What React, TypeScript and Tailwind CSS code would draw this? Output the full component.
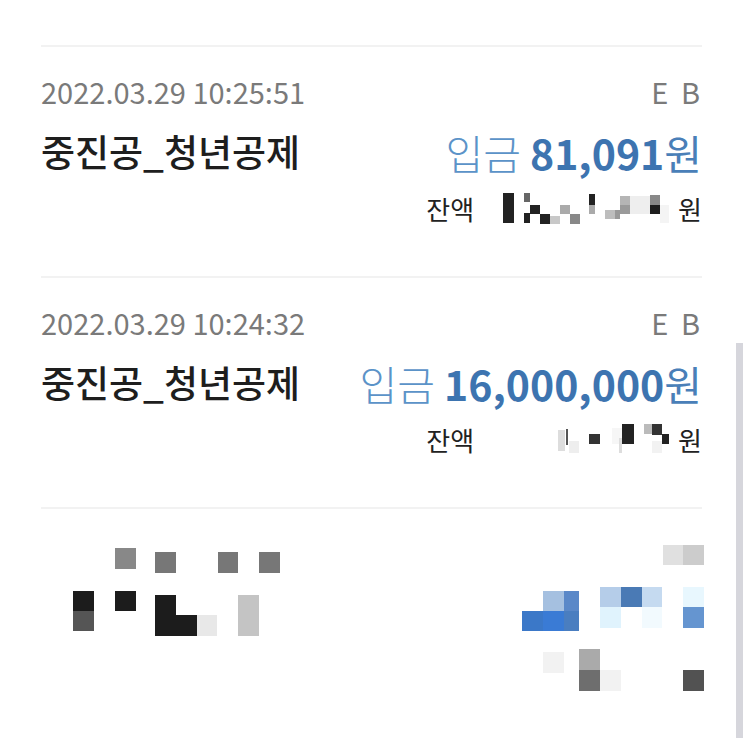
import React from "react";

type Cell = [number, number, number, number, string];

function Mosaic({ x, y, w, h, cells }: { x: number; y: number; w: number; h: number; cells: Cell[] }) {
  return (
    <svg width={w} height={h} viewBox={`${x} ${y} ${w} ${h}`} className="block">
      {cells.map((c, i) => (
        <rect key={i} x={c[0]} y={c[1]} width={c[2] - c[0]} height={c[3] - c[1]} fill={c[4]} />
      ))}
    </svg>
  );
}

const bal1: Cell[] = [
  [501, 192, 512, 222, "#222222"],
  [522, 192, 528, 201, "#666666"],
  [522, 212, 528, 222, "#222222"],
  [528, 204, 538, 213, "#222222"],
  [538, 213, 548, 223, "#222222"],
  [548, 215, 558, 223, "#c8c8c8"],
  [558, 204, 568, 213, "#aaaaaa"],
  [568, 213, 578, 223, "#888888"],
  [587, 193, 593, 204, "#222222"],
  [587, 204, 593, 213, "#aaaaaa"],
  [603, 209, 613, 218, "#bdbdbd"],
  [613, 209, 618, 218, "#999999"],
  [618, 195, 628, 204, "#b5b5b5"],
  [618, 204, 628, 213, "#9a9a9a"],
  [628, 195, 648, 213, "#eeeeee"],
  [648, 194, 658, 204, "#888888"],
  [648, 204, 658, 213, "#1e1e1e"],
  [658, 204, 667, 222, "#f4f4f4"],
];

const bal2: Cell[] = [
  [556, 432, 563, 453, "#dddddd"],
  [567, 443, 577, 455, "#eeeeee"],
  [564, 431, 566, 447, "#555555"],
  [587, 436, 598, 446, "#333333"],
  [610, 430, 620, 446, "#f6f6f6"],
  [617, 440, 620, 455, "#dddddd"],
  [620, 426, 632, 446, "#222222"],
  [642, 426, 650, 436, "#bbbbbb"],
  [650, 426, 660, 437, "#333333"],
  [660, 436, 667, 446, "#222222"],
  [650, 443, 660, 455, "#f2f2f2"],
];

const leftCells: Cell[] = [
  [115, 549, 136, 570, "#888888"],
  [155, 553, 176, 574, "#777777"],
  [218, 553, 238, 574, "#777777"],
  [259, 553, 280, 574, "#777777"],
  [73, 592, 94, 612, "#1c1c1c"],
  [73, 612, 94, 632, "#555555"],
  [115, 592, 136, 612, "#1c1c1c"],
  [155, 596, 176, 637, "#1c1c1c"],
  [176, 616, 197, 637, "#1c1c1c"],
  [197, 616, 217, 637, "#e8e8e8"],
  [238, 596, 259, 637, "#c4c4c4"],
];

const rightCells: Cell[] = [
  [663, 546, 683, 566, "#e0e0e0"],
  [683, 546, 704, 566, "#cccccc"],
  [543, 592, 564, 612, "#a5c0e0"],
  [564, 592, 579, 612, "#5a88c8"],
  [522, 612, 543, 632, "#3b78c8"],
  [543, 612, 564, 632, "#3a7bd5"],
  [564, 612, 579, 632, "#4a7ec0"],
  [600, 588, 621, 608, "#b5cde9"],
  [621, 588, 642, 608, "#4a7ab5"],
  [642, 588, 662, 608, "#c5daf0"],
  [600, 608, 621, 629, "#e0f3fd"],
  [642, 608, 662, 629, "#f2fafe"],
  [683, 588, 704, 608, "#e8f7fe"],
  [683, 608, 704, 629, "#6595d0"],
  [543, 653, 564, 674, "#f2f2f2"],
  [579, 650, 600, 671, "#aaaaaa"],
  [579, 671, 600, 692, "#6e6e6e"],
  [600, 671, 621, 692, "#f2f2f2"],
  [683, 671, 704, 692, "#525252"],
];

const font = { fontFamily: '"Noto Sans CJK KR", "Noto Sans", sans-serif' };

function Item({ date, amount, bal, by }: { date: string; amount: string; bal: Cell[]; by: number }) {
  return (
    <div className="border-t-2 border-[#f2f2f2] pt-[27px] pb-[50px]">
      <div className="flex h-[36px] items-center justify-between text-[29px] text-[#7a7a7a]">
        <span>{date}</span>
        <span className="tracking-[3px] mr-[-1px]">E B</span>
      </div>
      <div className="mt-[20px] flex h-[44px] items-center justify-between">
        <span className="text-[37px] font-medium text-[#1e1e1e]">중진공_청년공제</span>
        <span className="text-[41px] leading-[44px] text-[#3d74b0]">
          <span className="font-light text-[#5b93c8]">입금 </span>
          <span className="font-bold">{amount}</span>
          <span className="text-[#4a7fb8]">원</span>
        </span>
      </div>
      <div className="mt-[16px] flex h-[36px] items-center justify-end text-[26px] text-[#222222]">
        <span>잔액</span>
        <div className="ml-[29px] mr-[9px]">
          <Mosaic x={501} y={by} w={166} h={34} cells={bal} />
        </div>
        <span>원</span>
      </div>
    </div>
  );
}

export default function App() {
  return (
    <div className="relative h-[738px] w-[743px] overflow-hidden bg-white" style={font}>
      <div className="px-[41px] pt-[45px]">
        <Item date="2022.03.29 10:25:51" amount="81,091" bal={bal1} by={190} />
        <Item date="2022.03.29 10:24:32" amount="16,000,000" bal={bal2} by={424} />
        <div className="border-t-2 border-[#f2f2f2] pt-[36px] flex justify-between">
          <div className="ml-[32px]">
            <Mosaic x={73} y={546} w={207} h={91} cells={leftCells} />
          </div>
          <div className="mr-[-2px]">
            <Mosaic x={522} y={546} w={182} h={146} cells={rightCells} />
          </div>
        </div>
      </div>
      <div className="absolute right-0 top-[343px] h-[395px] w-[7px] bg-[#d6d6dc]" />
    </div>
  );
}
